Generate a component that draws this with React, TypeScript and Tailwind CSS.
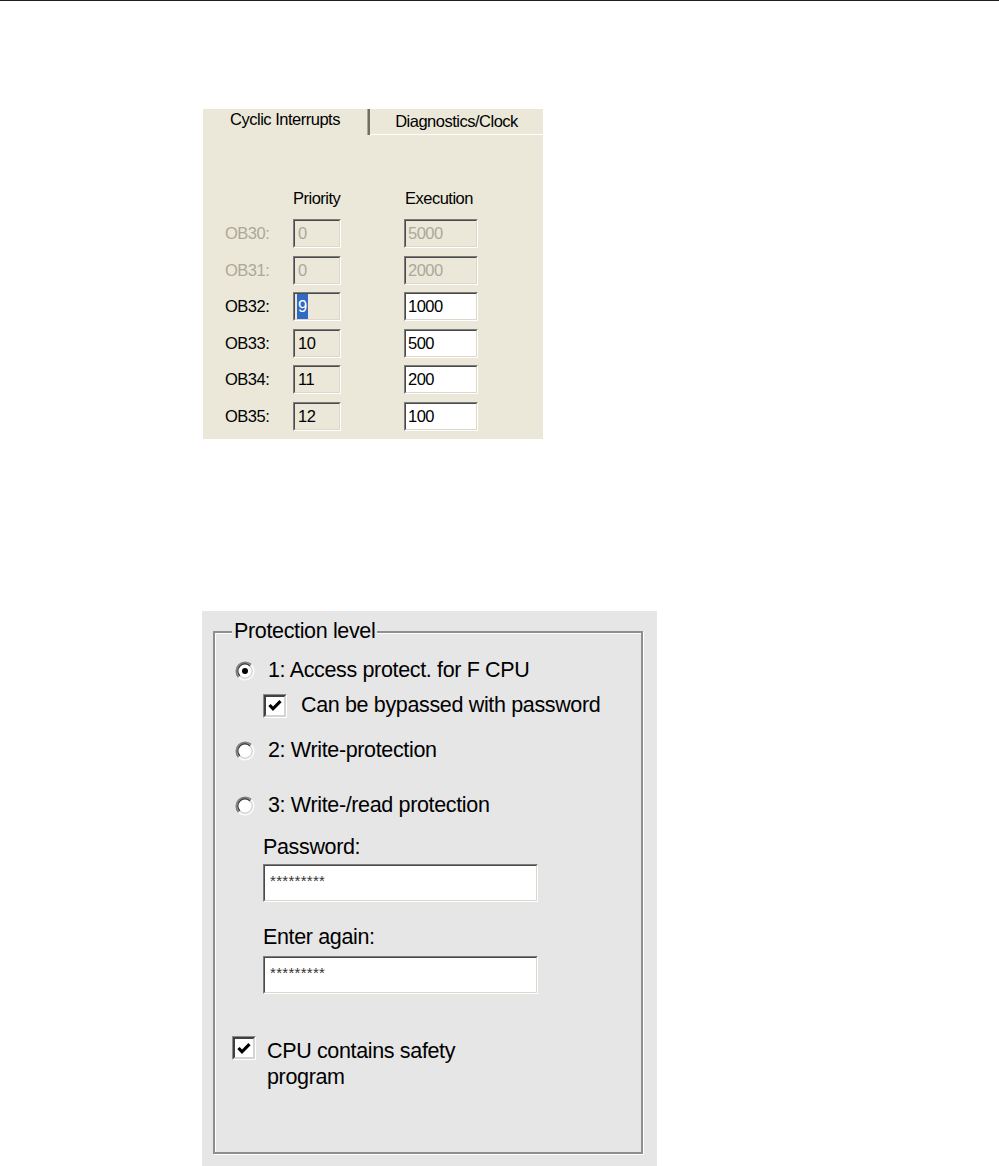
import type { ReactNode } from "react";

// sunken 3D frame used by all the edit fields
function Sunken({ className, inner, children }: { className: string; inner: string; children?: ReactNode }) {
  return (
    <div className={`border border-t-[#7c7c7c] border-l-[#7c7c7c] border-b-white border-r-white ${className}`}>
      <div className={`h-full border border-t-[#4a4a4a] border-l-[#4a4a4a] border-b-[#dcd9cc] border-r-[#dcd9cc] ${inner}`}>
        {children}
      </div>
    </div>
  );
}

function Radio({ checked }: { checked?: boolean }) {
  return (
    <svg width="20" height="20" viewBox="0 0 20 20" className="shrink-0">
      <circle cx="10" cy="10" r="8.5" fill="#fff" />
      <path d="M3.64 16.36 A9 9 0 0 1 16.36 3.64" fill="none" stroke="#808080" strokeWidth="1.6" />
      <path d="M16.36 3.64 A9 9 0 0 1 3.64 16.36" fill="none" stroke="#fafafa" strokeWidth="1.6" />
      <path d="M4.9 15.1 A7.2 7.2 0 0 1 15.1 4.9" fill="none" stroke="#404040" strokeWidth="1.4" />
      <path d="M15.1 4.9 A7.2 7.2 0 0 1 4.9 15.1" fill="none" stroke="#d4d4d4" strokeWidth="1.4" />
      {checked && <circle cx="10" cy="10" r="3" fill="#000" />}
    </svg>
  );
}

function Check() {
  return (
    <div className="w-[24px] h-[24px] shrink-0 border border-t-[#8a8a8a] border-l-[#8a8a8a] border-b-white border-r-white">
      <div className="h-full border-2 border-t-[#404040] border-l-[#404040] border-b-[#d4d4d4] border-r-[#d4d4d4] bg-white flex items-center justify-center">
        <svg width="14" height="13" viewBox="0 0 14 13">
          <path d="M1.5 6 L5 9.8 L12.5 2.2" fill="none" stroke="#000" strokeWidth="3.2" />
        </svg>
      </div>
    </div>
  );
}

const rows = [
  { ob: "OB30:", prio: "0", exec: "5000", off: true },
  { ob: "OB31:", prio: "0", exec: "2000", off: true },
  { ob: "OB32:", prio: "9", exec: "1000", sel: true },
  { ob: "OB33:", prio: "10", exec: "500" },
  { ob: "OB34:", prio: "11", exec: "200" },
  { ob: "OB35:", prio: "12", exec: "100" },
];

export default function App() {
  return (
    <div className="w-[999px] h-[1166px] bg-white overflow-hidden font-['Liberation_Sans',Arial,sans-serif] text-black">
      <div className="h-px bg-[#231f20]" />

      {/* Cyclic interrupts dialog */}
      <div className="ml-[203px] mt-[108px] w-[340px] h-[330px] bg-[#ebe8d9] text-[16.5px] tracking-[-0.5px] leading-[19px]">
        <div className="flex h-[26px]">
          <div className="w-[164px] pt-[1px] text-center">Cyclic Interrupts</div>
          <div className="w-px bg-[#aca899]" />
          <div className="w-[2px] bg-[#716f64]" />
          <div className="flex-1 pt-[3px] text-center border-b border-white">Diagnostics/Clock</div>
        </div>

        <div className="flex mt-[54px] h-[19px]">
          <div className="w-[90px]" />
          <div className="w-[111px]">Priority</div>
          <div className="pl-px">Execution</div>
        </div>

        <div className="mt-[11px] flex flex-col gap-y-[7.5px]">
          {rows.map((r) => (
            <div key={r.ob} className={`flex items-center h-[29px] pl-[22px] ${r.off ? "text-[#aca899]" : ""}`}>
              <div className="w-[68px]">{r.ob}</div>
              <Sunken className="w-[48px] h-[29px]" inner="flex items-center pl-[2px]">
                {r.sel ? (
                  <span className="bg-[#316ac5] text-white h-[25px] flex items-center px-[1px]">{r.prio}</span>
                ) : (
                  <span className="pl-px">{r.prio}</span>
                )}
              </Sunken>
              <Sunken className="ml-[63px] w-[74px] h-[29px]" inner={`flex items-center pl-[2px] ${r.off ? "" : "bg-white"}`}>
                {r.exec}
              </Sunken>
            </div>
          ))}
        </div>
      </div>

      {/* Protection level dialog */}
      <div className="ml-[202px] mt-[172px] w-[455px] h-[555px] bg-[#e6e6e6] pt-[20px] pl-[11px] text-[21.5px] tracking-[-0.35px] leading-[25px]">
        <div className="relative w-[430px] h-[523px] border-2 border-[#8e8e8e] shadow-[inset_1px_1px_0_#fff,1px_1px_0_#fff] pl-[20px]">
          <div className="absolute left-[17px] top-[-14px] px-[2px] bg-[#e6e6e6]">Protection level</div>

          <div className="mt-[25px] h-[25px] flex items-center gap-[13px]">
            <Radio checked />
            <span>1: Access protect. for F CPU</span>
          </div>
          <div className="mt-[10px] h-[25px] ml-[28px] flex items-center gap-[14px]">
            <Check />
            <span>Can be bypassed with password</span>
          </div>
          <div className="mt-[20px] h-[25px] flex items-center gap-[13px]">
            <Radio />
            <span>2: Write-protection</span>
          </div>
          <div className="mt-[30px] h-[25px] flex items-center gap-[13px]">
            <Radio />
            <span>3: Write-/read protection</span>
          </div>

          <div className="ml-[28px]">
            <div className="mt-[17px]">Password:</div>
            <Sunken className="mt-[4px] w-[275px] h-[38px]" inner="bg-white pl-[5px] pt-[6px] text-[15px] leading-[18px] tracking-[0.3px] text-[#333]">
              *********
            </Sunken>
            <div className="mt-[23px]">Enter again:</div>
            <Sunken className="mt-[6px] w-[275px] h-[38px]" inner="bg-white pl-[5px] pt-[6px] text-[15px] leading-[18px] tracking-[0.3px] text-[#333]">
              *********
            </Sunken>
          </div>

          <div className="mt-[42px] -ml-[3px] flex items-start gap-[11px] leading-[26px]">
            <Check />
            <span className="pt-[2px]">
              CPU contains safety
              <br />
              program
            </span>
          </div>
        </div>
      </div>
    </div>
  );
}
